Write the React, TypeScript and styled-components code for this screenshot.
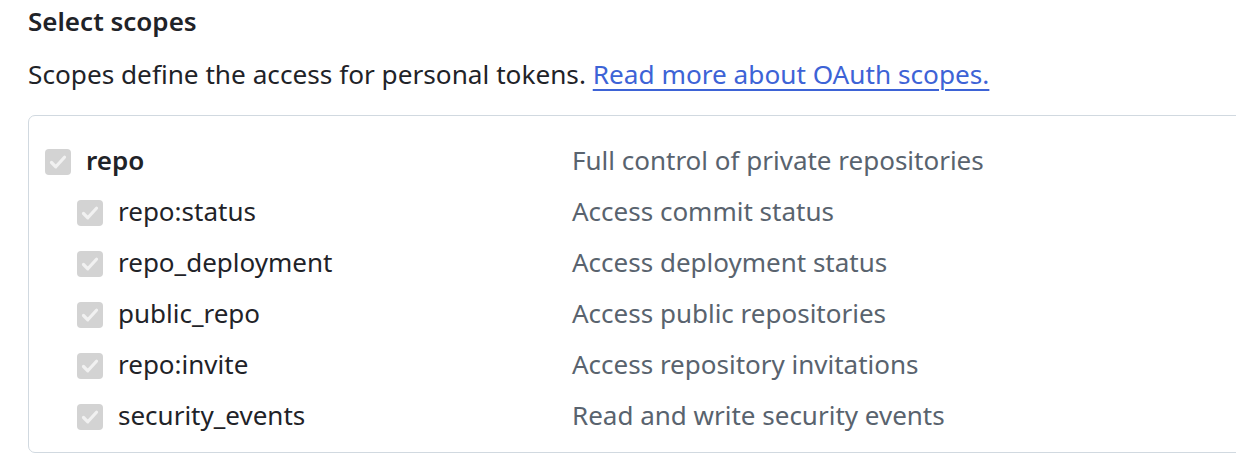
import React from 'react'
import styled, { createGlobalStyle } from 'styled-components'

const Global = createGlobalStyle`
  html, body {
    margin: 0;
    padding: 0;
    background: #ffffff;
    overflow: hidden;
  }
  body {
    font-family: "Noto Sans", "Open Sans", "Liberation Sans", sans-serif;
    color: #1f2328;
  }
`

const Page = styled.div`
  padding: 5px 0 0 28px;
  width: 1260px;
`

const Heading = styled.h3`
  margin: 0;
  font-size: 26px;
  font-weight: 600;
  line-height: 32px;
  color: #1f2328;
`

const Lead = styled.p`
  margin: 21px 0 0;
  font-size: 26.2px;
  line-height: 32px;
  color: #1f2328;
`

const Link = styled.a`
  color: #3d63d6;
  text-decoration: underline;
  text-decoration-thickness: 2px;
  text-underline-offset: 5px;
`

const Box = styled.div`
  margin-top: 25px;
  border: 1px solid #d1d9e0;
  border-radius: 7px;
  padding: 20px 0 10px 16px;
`

const Row = styled.div<{ $sub?: boolean }>`
  display: grid;
  grid-template-columns: ${p => (p.$sub ? '495px' : '527px')} 1fr;
  align-items: center;
  height: 51px;
  padding-left: ${p => (p.$sub ? '32px' : '0')};
`

const Name = styled.label`
  display: flex;
  align-items: center;
  gap: 15px;
`

const Label = styled.span<{ $bold?: boolean }>`
  font-size: 26px;
  line-height: 32px;
  padding-bottom: 4px;
  font-weight: ${p => (p.$bold ? 600 : 400)};
  color: #1f2328;
`

const Check = styled.span`
  display: inline-flex;
  align-items: center;
  justify-content: center;
  width: 26px;
  height: 26px;
  border-radius: 4px;
  background: #d3d3d3;
  flex: none;
`

const Desc = styled.span`
  font-size: 26px;
  line-height: 32px;
  padding-bottom: 4px;
  color: #59636e;
`

const scopes = [
  { name: 'repo', desc: 'Full control of private repositories', sub: false },
  { name: 'repo:status', desc: 'Access commit status', sub: true },
  { name: 'repo_deployment', desc: 'Access deployment status', sub: true },
  { name: 'public_repo', desc: 'Access public repositories', sub: true },
  { name: 'repo:invite', desc: 'Access repository invitations', sub: true },
  { name: 'security_events', desc: 'Read and write security events', sub: true },
]

const Tick = () => (
  <svg width="26" height="26" viewBox="0 0 26 26" fill="none">
    <path d="M6.5 13.5 L10.8 17.8 L19.5 8.2" stroke="#f1f1f1" strokeWidth="3.2" strokeLinecap="round" strokeLinejoin="round" />
  </svg>
)

export default function App() {
  return (
    <Page>
      <Global />
      <Heading>Select scopes</Heading>
      <Lead>
        Scopes define the access for personal tokens. <Link href="#">Read more about OAuth scopes.</Link>
      </Lead>
      <Box>
        {scopes.map(s => (
          <Row key={s.name} $sub={s.sub}>
            <Name>
              <Check><Tick /></Check>
              <Label $bold={!s.sub}>{s.name}</Label>
            </Name>
            <Desc>{s.desc}</Desc>
          </Row>
        ))}
      </Box>
    </Page>
  )
}
